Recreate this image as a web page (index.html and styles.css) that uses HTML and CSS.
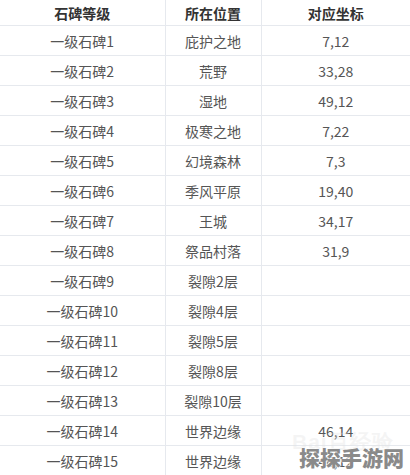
FILE: index.html
```html
<!DOCTYPE html>
<html>
<head>
<meta charset="utf-8">
<link rel="stylesheet" href="styles.css">
</head>
<body>
<div class="wrap">
<table class="grid">
<colgroup><col class="c1"><col class="c2"><col class="c3"></colgroup>
<thead>
<tr><th>石碑等级</th><th>所在位置</th><th>对应坐标</th></tr>
</thead>
<tbody>
<tr><td>一级石碑1</td><td>庇护之地</td><td>7,12</td></tr>
<tr><td>一级石碑2</td><td>荒野</td><td>33,28</td></tr>
<tr><td>一级石碑3</td><td>湿地</td><td>49,12</td></tr>
<tr><td>一级石碑4</td><td>极寒之地</td><td>7,22</td></tr>
<tr><td>一级石碑5</td><td>幻境森林</td><td>7,3</td></tr>
<tr><td>一级石碑6</td><td>季风平原</td><td>19,40</td></tr>
<tr><td>一级石碑7</td><td>王城</td><td>34,17</td></tr>
<tr><td>一级石碑8</td><td>祭品村落</td><td>31,9</td></tr>
<tr><td>一级石碑9</td><td>裂隙2层</td><td></td></tr>
<tr><td>一级石碑10</td><td>裂隙4层</td><td></td></tr>
<tr><td>一级石碑11</td><td>裂隙5层</td><td></td></tr>
<tr><td>一级石碑12</td><td>裂隙8层</td><td></td></tr>
<tr><td>一级石碑13</td><td>裂隙10层</td><td></td></tr>
<tr><td>一级石碑14</td><td>世界边缘</td><td>46,14</td></tr>
<tr><td>一级石碑15</td><td>世界边缘</td><td>46,12</td></tr>
</tbody>
</table>
<div class="mark-baidu">Bai<span>百</span>经验</div>
<div class="mark">探探手游网</div>
</div>
</body>
</html>
```
FILE: styles.css
```css
html, body {
  margin: 0;
  padding: 0;
  background: #fff;
}
.wrap {
  position: relative;
  width: 410px;
  height: 475px;
  overflow: hidden;
  font-family: "Noto Sans CJK SC", "Noto Sans", sans-serif;
}
.grid {
  width: 410px;
  border-collapse: collapse;
  table-layout: fixed;
  font-size: 14px;
}
.c1 { width: 165px; }
.c2 { width: 96px; }
.c3 { width: 149px; }
.grid th, .grid td {
  text-align: center;
  padding: 0;
  border-bottom: 1px solid #e6e9ee;
  border-left: 1px solid #e6e9ee;
  line-height: 16px;
}
.grid th:first-child, .grid td:first-child {
  border-left: none;
}
.grid th {
  height: 25px;
  font-weight: bold;
  color: #333;
}
.grid td {
  height: 29px;
  color: #555;
}
.mark-baidu {
  position: absolute;
  left: 292px;
  top: 428px;
  font-size: 21px;
  font-weight: bold;
  color: rgba(225, 225, 225, 0.35);
  font-family: "Liberation Sans", sans-serif;
  letter-spacing: 1px;
}
.mark {
  position: absolute;
  left: 299px;
  top: 442px;
  font-size: 21px;
  font-weight: 900;
  color: #8a8a8a;
  text-shadow: 0 0 2px #fff, 0 0 2px #fff, 0 0 1px #fff;
}
```
